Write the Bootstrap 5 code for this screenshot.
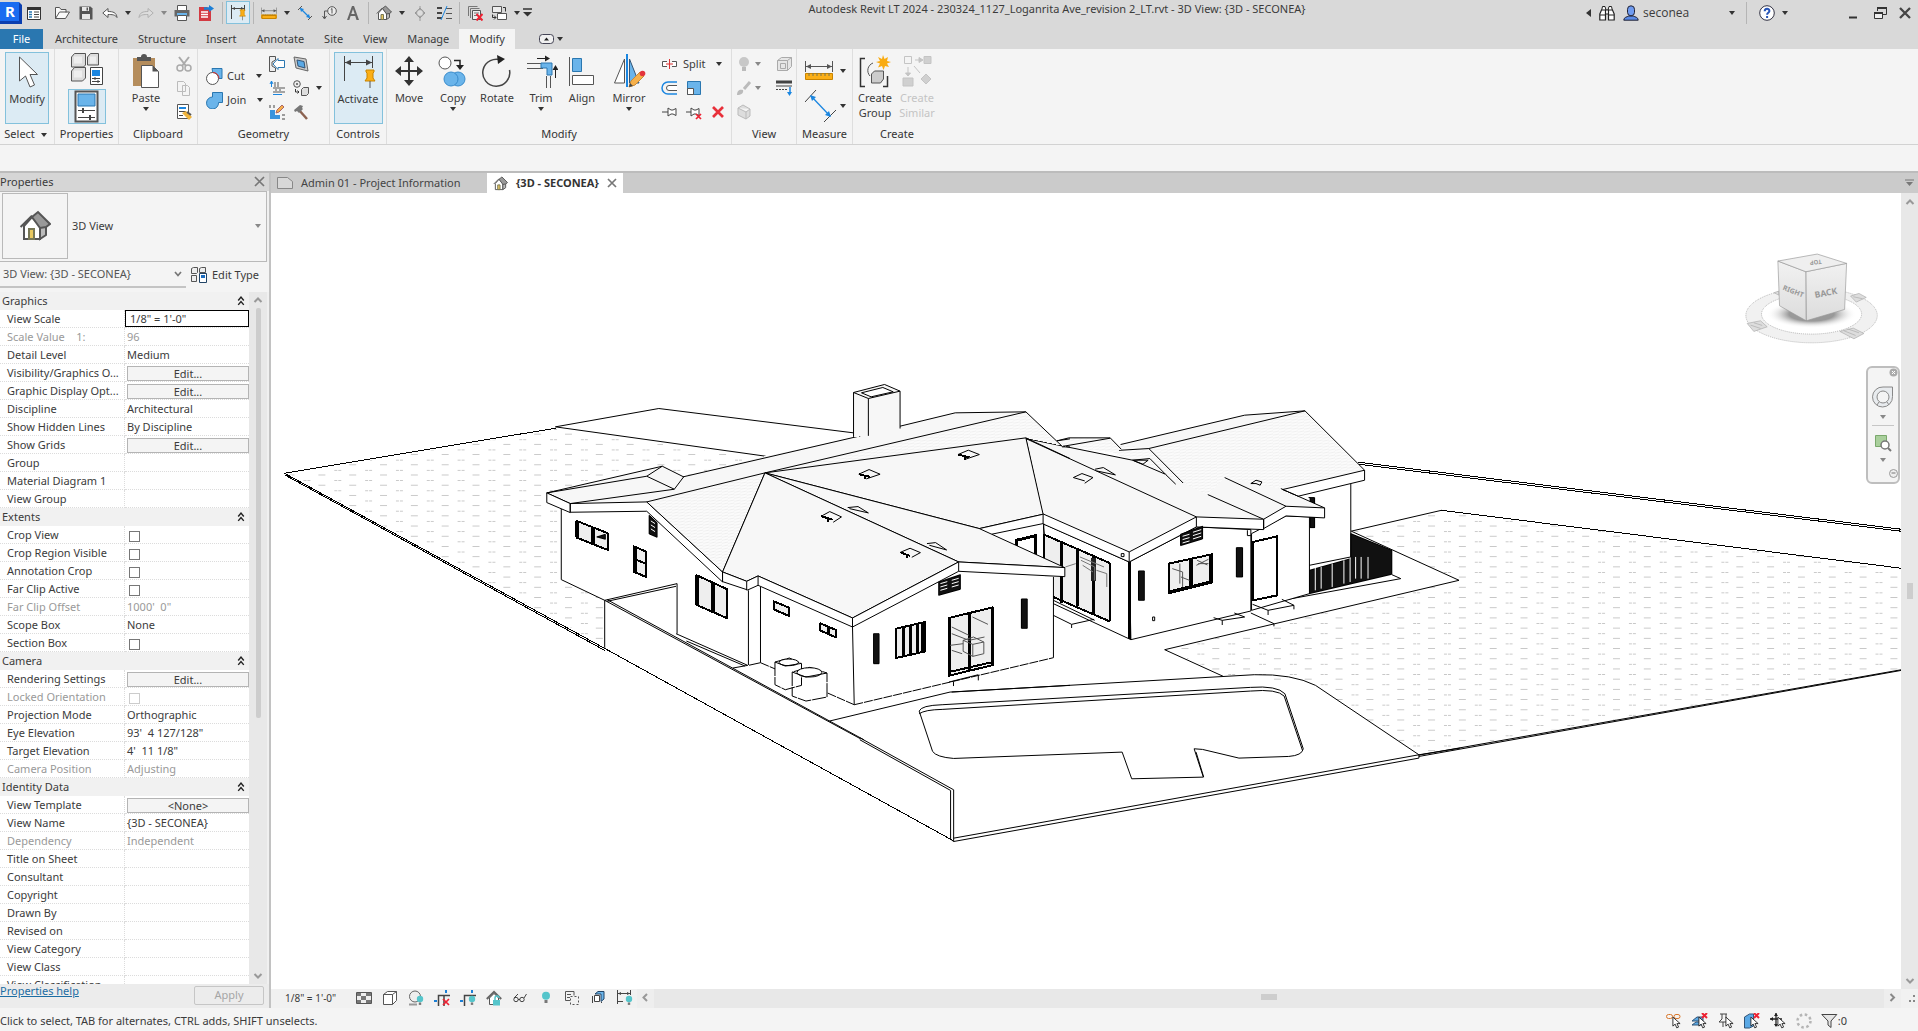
<!DOCTYPE html>
<html lang="en">
<head>
<meta charset="utf-8">
<meta name="viewport" content="width=device-width, initial-scale=1">
<title>Autodesk Revit LT 2024</title>
<link href="https://cdn.jsdelivr.net/npm/bootstrap@5.3.0/dist/css/bootstrap.min.css" rel="stylesheet">
<style>
body{font-family:"Noto Sans","Open Sans",sans-serif;font-size:11px;line-height:16px;color:#3b3b3b;background:#f4f4f4;overflow:hidden}
button{font:inherit;color:inherit;background:none;border:0;padding:0}
svg{display:block;flex:none}
.topbar{background:#d9d9d9}
.qat{height:25px}
.qb{width:16px;height:16px;margin:0 4px;flex:none}
.arr{width:12px;height:16px;flex:none;display:inline-flex;align-items:center;justify-content:center}
.arr::after{content:"";border:3px solid transparent;border-top:4px solid #333;border-bottom:0}
.arr.dim::after{border-top-color:#888}
.vsep{width:1px;height:22px;background:#b5b5b5;margin:0 3px;flex:none}
.on{background:#dcebf4;border:1px solid #83c1dc}
.qon{width:24px;height:23px;flex:none;padding:2px 3px}
.wb{width:17px}
.wmin{margin-left:52px}
.wres{margin-left:8px}
.user{width:95px;font-family:"Open Sans",sans-serif;font-size:12px}
.rtabs{height:20px;margin-top:4px}
.rtabs a{color:#3b3b3b;text-decoration:none;padding:2px 10px;height:20px}
.rtabs a.filetab{background:#2a77b0;color:#fff;width:43px;padding:2px 0;text-align:center;margin-right:2px}
.rtabs a.active{background:#f4f4f4}
.ribbon{background:#f4f4f4;border-bottom:1px solid #d2d2d2;height:96px}
.panel{border-right:1px solid #dedede;padding-top:3px}
.panel.last{border:0}
.pbody{height:72px}
.plabel{height:20px;line-height:20px;text-align:center;color:#333}
.big{width:44px;height:72px;padding-top:2px;line-height:15px;display:flex;flex-direction:column;align-items:center;flex:none}
.big svg{margin-bottom:2px}
.big .arr{height:8px}
.slim{width:38px}
.mirr{margin:0 2px 0 6px}
.off{color:#c4c4c4;width:40px}
.srow{height:24px;display:flex;align-items:center}
.cutjoin{width:55px;padding-top:12px}
.optbar{height:26px;border-bottom:2px solid #bcbcbc;box-sizing:content-box}
.props{width:271px;border-right:2px solid #c2c2c2;background:#f0f0f0}
.phead{height:18px;line-height:18px;background:#d6d6d6}
.typebox{height:71px;border:1px solid #b9b9b9;border-left:0;margin-right:2px;background:#f4f4f4;padding:2px}
.thumb{width:66px;height:66px;border:1px solid #b9b9b9}
.inst{height:31px;background:#f4f4f4}
.inst select{width:186px;height:26px;font:inherit;color:#555;border:0;border-bottom:2px solid #c4c4c4;border-radius:0;background:none;padding:0 3px;appearance:none;-webkit-appearance:none}
.plist{min-height:0;overflow:hidden}
.ptable{width:249px;table-layout:fixed;border-collapse:separate;border-spacing:0;background:#fff}
.ptable tr{height:18px}
.ptable th,.ptable td{font-weight:400;padding:0;height:18px;line-height:17px;border-bottom:1px dotted #dcdcdc;white-space:nowrap;overflow:hidden;text-overflow:ellipsis}
.ptable th{padding-left:7px;border-right:1px dotted #dcdcdc}
.ptable td{padding-left:2px}
.ptable .sec{background:#f1f1f1;border:0;padding-left:2px;line-height:18px}
.ptable .sec svg{margin:4px 4px 0 0;float:right}
.ptable .dis{color:#999}
.ptable td button{display:block;width:122px;height:15px;line-height:13px;border:1px solid #b4b4b4;background:#f4f4f4;margin-top:1px}
.ptable td input[type=checkbox]{appearance:none;-webkit-appearance:none;width:11px;height:11px;border:1px solid #777;background:#fff;display:block;margin:4px 0 0 2px}
.ptable td input[type=checkbox]:disabled{border-color:#ccc}
.ptable td.edit{padding:0}
.ptable td.edit input{width:124px;height:17px;border:1px solid #000;padding:0 4px;font:inherit;color:inherit;display:block}
.vscroll{width:18px;background:#e8e8e8}
.pfoot{height:25px;background:#ececec;line-height:14px}
.pfoot a{color:#1c6da3}
.apply{width:70px;height:19px;border:1px solid #c6c6c6;border-radius:2px;color:#a5a5a5;line-height:16px;margin:2px 5px 0 0}
.dtabs{height:20px;background:#cbcbcb}
.dtab{height:20px;padding:1px 6px 0;color:#444;text-decoration:none;display:flex;align-items:center;gap:8px}
.dtab.act{background:#fff;font-weight:700;color:#333}
.canvasbox{min-height:0;background:#fff;position:relative;overflow:hidden}
.canvasbox>svg{width:100%;height:100%}
.navbox{right:1px;top:173px;width:34px;height:118px;border:2px solid #bebebe;border-radius:6px;background:#f4f4f4}
.sb{width:17px;background:#e8e8e8}
.viewbar{height:19px;background:#f1f1f1}
.viewbar .ib{width:26px;flex:none;display:flex;justify-content:center;padding-bottom:2px}
.vscale{width:80px;padding:0 0 2px 14px;font-size:10px;text-align:left}
.status{height:23px;background:#f4f4f4;padding-top:2px}
.status .ib{width:26px;display:flex;justify-content:center}
.filter{margin:0 71px 0 4px}
</style>
</head>
<body class="d-flex flex-column vh-100">
<svg width="0" height="0" class="position-absolute" aria-hidden="true">
<defs>
<symbol id="home" viewBox="0 0 16 16"><path d="M2.500 8v6.500h8V8L6.500 3.500z" fill="#fff" stroke="#555"/><path d="M10.500 14.500l3-2V7l-3 1z" fill="#bbb" stroke="#555"/><path d="M6.500 3.500L9.500 1l6 6-2 1.500-3 .5z" fill="#999" stroke="#555"/><path d="M.8 8.500l5.700-5.700" stroke="#555" fill="none"/><path d="M5 9.500h2.500v5H5z" fill="#e8c860" stroke="#775"/></symbol>
<symbol id="cur" viewBox="0 0 10 14"><path d="M1 1v10l2.500-2.200L5.300 13l2-.9-1.800-3.900H9z" fill="#fff" stroke="#222"/></symbol>
<symbol id="dbl" viewBox="0 0 7 9"><path d="M1 4l2.500-3L6 4M1 8l2.500-3L6 8" fill="none" stroke="#222" stroke-width="1.300"/></symbol>
<symbol id="up" viewBox="0 0 10 8"><path d="M1.500 6L5 2.500 8.500 6" fill="none" stroke="#999" stroke-width="2"/></symbol>
<symbol id="ruler" viewBox="0 0 28 19"><path d="M.5 0v11M27.500 0v11M1 5.500h26" stroke="#555"/><path d="M1 5.500l5-2.500v5zM27 5.500l-5-2.500v5z" fill="#555"/><path d="M.5 12.500h27v6H.5z" fill="#fbaf17" stroke="#c98400"/><path d="M4 12v3M8 12v3M12 12v3M16 12v3M20 12v3M24 12v3" stroke="#775"/></symbol>
<symbol id="pin" viewBox="0 0 12 20"><path d="M2 1h8v2L9 4v5l2 3H1l2-3V4L2 3z" fill="#fbaf17" stroke="#c98400"/><path d="M6 12v7" stroke="#555"/></symbol>
<symbol id="bulb" viewBox="0 0 10 12"><circle cx="5" cy="4.200" r="4" fill="#55c5cb"/><path d="M3.500 8.500h3v3h-3z" fill="#777"/></symbol>
</defs></svg>

<header class="topbar">
<div class="qat d-flex align-items-center">
<svg width="22" height="23" viewBox="0 0 22 23"><path d="M0 1h19l3 3v19H0z" fill="#0b3fb0"/><path d="M0 1h19v19H0z" fill="#1a6cf0"/><text x="5" y="16" font-size="15" font-weight="700" fill="#fff">R</text></svg>
<button class="qb" aria-label="Application menu"><svg width="16" height="16"><path d="M1.500 2.500h13v12h-13z" fill="#fff" stroke="#333"/><path d="M1 2h14v3H1z" fill="#333"/><path d="M3 7h3M3 9.500h3M3 12h3" stroke="#2a77b0" stroke-width="1.500"/><path d="M8 7h5M8 9.500h5M8 12h5" stroke="#444"/></svg></button>
<button class="qb ms-2" aria-label="Open"><svg width="16" height="16"><path d="M1.500 13.500v-11h4l1.500 2h5v3M1.500 13.500l4-6.500h10l-4 6.500z" fill="#fafafa" stroke="#555"/></svg></button>
<button class="qb" aria-label="Save"><svg width="16" height="16"><path d="M1.500 1.500h11l2 2v11h-13z" fill="#555"/><path d="M4 2h7v4H4zM4 9h8v5H4z" fill="#e8e8e8"/><path d="M8.500 2.500h1.500v3H8.500z" fill="#555"/></svg></button>
<button class="qb" aria-label="Undo"><svg width="16" height="16"><path d="M.8 8L6 3.500v3c5 0 8.500 1 9 6-2-3-5-3-9-3v3z" fill="#fff" stroke="#555"/></svg></button><button class="arr" aria-label="Undo list"></button>
<button class="qb" aria-label="Redo"><svg width="16" height="16"><path d="M15.200 8L10 3.500v3c-5 0-8.500 1-9 6 2-3 5-3 9-3v3z" fill="#ddd" stroke="#b0b0b0"/></svg></button><button class="arr dim" aria-label="Redo list"></button>
<button class="qb" aria-label="Print"><svg width="16" height="16"><path d="M3.500.5h9v5h-9z" fill="#fff" stroke="#555"/><path d="M.5 5h15v6.500H.5z" fill="#666"/><path d="M3 8h10v4H3z" fill="#6ab4ea"/><path d="M3.500 10.500h9v5h-9z" fill="#fff" stroke="#555"/></svg></button>
<button class="qb" aria-label="Export PDF"><svg width="16" height="16"><path d="M1 2h8l4 4v10H1z" fill="#d33a42"/><path d="M3 7h7M3 9.500h7M3 12h7" stroke="#fff" stroke-width="1.500"/><path d="M6 3.500h6" stroke="#1b7fd6" stroke-width="2.500"/><path d="M11 0l5 3.500L11 7z" fill="#1b7fd6"/></svg></button>
<span class="vsep ms-1"></span><button class="on qon" aria-label="Activate controls"><svg width="17" height="17"><path d="M1.500 1v14M14.500 1v6M2 4.500h12" stroke="#444"/><path d="M2 4.500l3-1.500v3zM14 4.500L11 3v3z" fill="#444"/><use href="#pin" x="9" y="5" width="7" height="12"/></svg></button><span class="vsep"></span>
<button class="qb" aria-label="Measure"><svg width="16" height="16"><use href="#ruler" y="2" width="16" height="12"/><path d="M1 10.500h14v3H1z" fill="#fbaf17" stroke="#c98400"/></svg></button><button class="arr" aria-label="Measure list"></button>
<button class="qb" aria-label="Aligned dimension"><svg width="16" height="16"><path d="M1 5l4-4M11 15l4-4" stroke="#555"/><path d="M3.500 3.500l9 9" stroke="#1b86e0" stroke-width="1.300"/><path d="M3 3l4 1-3 3zM13 13l-4-1 3-3z" fill="#1b86e0"/></svg></button>
<button class="qb" aria-label="Tag by category"><svg width="16" height="16"><circle cx="11" cy="6" r="4.300" fill="#eee" stroke="#555"/><path d="M11 3.500v5M9.800 4.500L11 3.500M6.500 6H3.500v7M1.500 11l2 3 2-3" stroke="#555" fill="none"/></svg></button>
<button class="qb" aria-label="Text"><svg width="16" height="16"><path d="M2 15L7 1h2l5 14h-2.500l-1.300-4H5.600l-1.300 4z" fill="#666"/><path d="M6.300 9h3.400L8 4z" fill="#d9d9d9"/></svg></button>
<span class="vsep"></span>
<button class="qb" aria-label="Default 3D view"><svg width="16" height="16"><use href="#home" width="16" height="16"/></svg></button><button class="arr" aria-label="3D view list"></button>
<button class="qb" aria-label="Section"><svg width="16" height="16"><path d="M8 1v2M8 13v3M3 8l5-5 5 5-5 5z" fill="none" stroke="#999"/><circle cx="8" cy="8" r="3.500" fill="#ddd" stroke="#999"/></svg></button>
<button class="qb" aria-label="Thin lines"><svg width="16" height="16"><path d="M1 3h5M1 8h5M1 13h5" stroke="#444" stroke-width="2"/><path d="M10 3.500h6M10 8.500h6M10 13.500h6" stroke="#555"/><path d="M5 15L11 1" stroke="#1b86e0"/></svg></button>
<span class="vsep"></span>
<button class="qb" aria-label="Close inactive views"><svg width="16" height="16"><path d="M1.500 11V1.500h9M3.500 13V3.500h9" fill="none" stroke="#777"/><path d="M5.500 5.500h8v9h-8z" fill="#eee" stroke="#555"/><path d="M7 8h5M7 10.500h3" stroke="#777"/><path d="M9.500 9l6 6.500M15.500 9l-6 6.500" stroke="#e23" stroke-width="2"/></svg></button>
<button class="qb" aria-label="Switch windows"><svg width="16" height="16"><path d="M1.500 1.500h9v6h-9z" fill="#eee" stroke="#555"/><path d="M6.500 8.500h9v6h-9z" fill="#fff" stroke="#555"/><path d="M12 2.500h2.500v4M1.500 9.500v3H5M3 10.500l2 2-2 2" fill="none" stroke="#333"/></svg></button><button class="arr" aria-label="Window list"></button>
<button aria-label="Customize toolbar"><svg width="9" height="9"><path d="M0 1h9" stroke="#333" stroke-width="1.500"/><path d="M0 4h9L4.500 8.500z" fill="#333"/></svg></button>
<div class="flex-grow-1 text-center pb-2 text-nowrap">Autodesk Revit LT 2024 - 230324_1127_Loganrita Ave_revision 2_LT.rvt - 3D View: {3D - SECONEA}</div>
<button aria-label="Collapse search" class="px-1"><svg width="5" height="8"><path d="M5 0v8L0 4z" fill="#333"/></svg></button>
<button class="qb" aria-label="Search"><svg width="16" height="16"><path d="M2.500 6l1-4.500h2.500L7 5M13.500 6l-1-4.500H10L9 5M6 5h4v4H6z" fill="#fff" stroke="#222"/><path d="M.8 9l1.700-4H6.500v10H.8zM15.200 9l-1.700-4H9.500v10h5.700zM1 10h5M10 10h5" fill="#fff" stroke="#222" stroke-width="1.200"/></svg></button>
<button class="qb" aria-label="Account"><svg width="16" height="16"><path d="M.8 15.200c0-3 3-3.200 5-4.200h4.400c2 1 5 1.200 5 4.200z" fill="#5b8be6" stroke="#223"/><rect x="4.500" y=".8" width="7" height="10" rx="3.500" fill="#6f9bf0" stroke="#223"/></svg></button>
<button class="user d-flex align-items-center justify-content-between"><span>seconea</span><span class="arr"></span></button>
<span class="vsep mx-2"></span>
<button class="qb" aria-label="Help"><svg width="16" height="16"><circle cx="8" cy="8" r="7.300" fill="#fff" stroke="#334"/><path d="M5.700 6.300c0-3.300 4.700-3.200 4.700-.3 0 1.800-2.300 1.800-2.300 3.700M8.100 11v2" fill="none" stroke="#2755b8" stroke-width="2"/></svg></button><button class="arr" aria-label="Help list"></button>
<button class="qb wb wmin" aria-label="Minimize"><svg width="16" height="16"><path d="M6 12.500h8" stroke="#333" stroke-width="2"/></svg></button>
<button class="qb wb wres" aria-label="Restore"><svg width="16" height="16"><path d="M5.500 6V3.500h9v6H11" fill="none" stroke="#333"/><path d="M5 3h10" stroke="#333" stroke-width="2"/><path d="M2.500 7.500h8v6h-8z" fill="#eee" stroke="#333"/><path d="M2 8h9" stroke="#333" stroke-width="2"/></svg></button>
<button class="qb wb" aria-label="Close"><svg width="16" height="16"><path d="M3 3l10 10M13 3L3 13" stroke="#444" stroke-width="2.300"/></svg></button>
</div>
<nav class="rtabs d-flex">
<a href="#" class="filetab">File</a><a href="#">Architecture</a><a href="#">Structure</a><a href="#">Insert</a><a href="#">Annotate</a><a href="#">Site</a><a href="#">View</a><a href="#">Manage</a><a href="#" class="active">Modify</a>
<button class="d-flex align-items-center ms-4" aria-label="Minimize ribbon"><svg width="15" height="10"><rect x=".5" y=".5" width="14" height="9" rx="3" fill="#f0f0f0" stroke="#445"/><path d="M5 6.500h5L7.500 3.500z" fill="#222"/></svg><span class="arr"></span></button>
</nav>
</header>

<section class="ribbon d-flex">
<div class="panel" style="width:55px"><div class="pbody d-flex justify-content-center"><button class="big on"><svg width="28" height="34"><path d="M6.500 2v24l6-5 4.500 11 4.500-2-4.500-10.500h7.500z" fill="#fff" stroke="#555"/></svg>Modify</button></div><div class="plabel">Select <span class="arr align-middle"></span></div></div>
<div class="panel" style="width:64px"><div class="pbody d-flex flex-column align-items-center gap-1"><button aria-label="Type properties"><svg width="34" height="33"><g stroke="#555" fill="#ddd"><path d="M1.500 5l3-3.500h11V13l-2 2h-12zM17.500 5l3-3.500h8V13h-11zM1.500 19l3-3.500h11V26l-3 3h-11z"/><path d="M4 4.500h8v7H4zM4 18.500h8v7H4zM20 4.500h6v7h-6z" fill="#eee" stroke="none"/></g><path d="M20.500 15.500h12v17h-12z" fill="#fff" stroke="#444"/><path d="M22 18h8v6h-8z" fill="#1b86e0"/><path d="M22 26.500h8M22 29.500h8M25 25v3M28 28v3" stroke="#444"/></svg></button><button class="on px-1" aria-label="Properties" style="width:38px;height:35px"><svg width="28" height="33"><path d="M2.500 1.500h22v30h-22z" fill="#fff" stroke="#555" stroke-width="2"/><path d="M5 4h17v12H5z" fill="#6ab4ea" stroke="#2a77b0"/><path d="M5 20.500h17M5 27.500h17" stroke="#444"/><path d="M10 18v5M17 25v5" stroke="#444" stroke-width="2"/></svg></button></div><div class="plabel">Properties</div></div>
<div class="panel" style="width:79px"><div class="pbody d-flex justify-content-center gap-2 ps-1"><button class="big" style="width:36px"><svg width="28" height="34"><path d="M1 4h22v28H1z" fill="#b58d5c"/><path d="M5 3h4a3 3 0 016 0h4v4H5z" fill="#555"/><path d="M9.500 11.500h11l6 6v16h-17z" fill="#fff" stroke="#555"/><path d="M20.500 11.500v6h6z" fill="#555"/></svg>Paste<span class="arr"></span></button><div class="ps-1"><button class="srow" aria-label="Cut to clipboard"><svg width="16" height="16"><path d="M3 1l7 9M13 1L6 10" stroke="#aaa" stroke-width="2"/><circle cx="4" cy="12" r="3" fill="none" stroke="#aaa" stroke-width="1.500"/><circle cx="12" cy="12" r="3" fill="none" stroke="#aaa" stroke-width="1.500"/></svg></button><button class="srow" aria-label="Copy to clipboard"><svg width="16" height="16"><path d="M1.500 1.500h6l2 2v8h-8zM6.500 5.500h5l2 2v8h-7z" fill="#f4f4f4" stroke="#bbb"/></svg></button><button class="srow" aria-label="Match type"><svg width="16" height="16"><path d="M1.500.5h11v14h-11z" fill="#fff" stroke="#555"/><path d="M3 3h7v2H3z" fill="#1b86e0"/><path d="M3 7.500h7M3 11.500h4" stroke="#444"/><path d="M6 9l4-2 6 6-3 3z" fill="#f0b43c"/><path d="M11 8l4 3" stroke="#555" stroke-width="2"/></svg></button></div></div><div class="plabel">Clipboard</div></div>
<div class="panel" style="width:132px"><div class="pbody d-flex ps-2 gap-2"><div class="cutjoin"><button class="srow gap-1"><svg width="17" height="17"><path d="M6 .5h10v10H8z" fill="#6ab4ea" stroke="#2a77b0"/><circle cx="6.500" cy="10.500" r="6" fill="#fff" stroke="#555"/><path d="M7 4.500a6 6 0 016 6" fill="none" stroke="#d33"/></svg>Cut<span class="arr ms-1"></span></button><button class="srow gap-1"><svg width="17" height="17"><path d="M6.500.5h10v10h-4a6 6 0 11-6-5.500z" fill="#6ab4ea" stroke="#2a77b0"/></svg>Join<span class="arr ms-1"></span></button></div>
<div class="d-flex gap-2"><div><button class="srow" aria-label="Cope"><svg width="16" height="16"><path d="M.5.5h6V4L3 6v4l3.500 2v3.500h-6z" fill="#eee" stroke="#555"/><path d="M15.500 4.500H9v-2L4 8l5 5.500v-2h6.500z" fill="#fff" stroke="#2a77b0"/></svg></button><button class="srow" aria-label="Wall joins"><svg width="16" height="16"><path d="M2.500 1v6M1 4l1.500-3L4 4M4 14.500h9" stroke="#1b86e0" fill="none"/><path d="M6 2v5M9 2v5M4 8h12M4 12h12M6 10h2M10 10h2" stroke="#555"/></svg></button><button class="srow" aria-label="Split face"><svg width="16" height="16"><path d="M1 6v9h10v-4H6V6z" fill="#3a94dd"/><path d="M1 1v3M5 1v3M13 11h3M13 15h3" stroke="#444"/><path d="M7 9l1-3 5-5 2 2-5 5z" fill="#f6b04a" stroke="#a66"/></svg></button></div>
<div><button class="srow" aria-label="Wall opening"><svg width="16" height="16"><path d="M1 1l12 2 2 12-12-3z" fill="#ccc" stroke="#666"/><path d="M4 4l7 1.500L12 12l-7-2z" fill="#5aa9e6" stroke="#357"/></svg></button><button class="srow" aria-label="Demolish"><svg width="16" height="16"><circle cx="4" cy="4" r="3.300" fill="#eee" stroke="#555"/><circle cx="4" cy="4" r="1" fill="#555"/><path d="M2.500 9v3H6M4.500 10.500L6 12l-1.500 1.500" fill="none" stroke="#333"/><path d="M8.500 9.500l2-2h5v6l-2 2h-5z" fill="#ddd" stroke="#555"/></svg></button><button class="srow" aria-label="Paint"><svg width="16" height="16"><path d="M6 6l8 9" stroke="#8b6250" stroke-width="2.500"/><path d="M1 6l6-5 3 1-1 2 1 1-4 4-2-2-2 1z" fill="#777"/></svg></button></div><span class="d-flex align-items-center"><button class="arr" aria-label="More" style="margin-left:-4px"></button></span></div></div><div class="plabel">Geometry</div></div>
<div class="panel" style="width:57px"><div class="pbody d-flex justify-content-center"><button class="big on" style="width:49px"><svg width="36" height="34"><path d="M4.500 1v25M32.500 1v12M5 7.500h27" stroke="#444"/><path d="M5 7.500l6-3v6zM32 7.500l-6-3v6z" fill="#444"/><use href="#pin" x="23" y="14" width="14" height="20"/></svg>Activate</button></div><div class="plabel">Controls</div></div>
<div class="panel" style="width:345px"><div class="pbody d-flex">
<button class="big"><svg width="28" height="34"><path d="M14 6v22M3 17h22" stroke="#333" stroke-width="2"/><path d="M14 2l5 6H9zM14 32l5-6H9zM0 17l6-5v10zM28 17l-6-5v10z" fill="#333"/></svg>Move</button>
<button class="big"><svg width="32" height="34"><circle cx="8" cy="9" r="6" fill="#fff" stroke="#555"/><path d="M17 6.500h6v6" fill="none" stroke="#222" stroke-width="1.500"/><path d="M19 11h8l-4 5z" fill="#222"/><circle cx="21" cy="25" r="7" fill="#6ab4ea" stroke="#3a8ccc"/><circle cx="14" cy="25" r="7" fill="#6ab4ea" stroke="#3a8ccc"/></svg>Copy<span class="arr"></span></button>
<button class="big"><svg width="32" height="34"><path d="M21 6.500A13.500 13.500 0 1028.500 16" fill="none" stroke="#444" stroke-width="1.500"/><path d="M16 1l8 4-7 5z" fill="#222"/></svg>Rotate</button>
<button class="big"><svg width="34" height="34"><path d="M3 9.500h16M3 14.500h16M22.500 22v12M26.500 22v12" stroke="#555"/><path d="M17 9h11v12h-5v-7h-6z" fill="#6ab4ea" stroke="#2a77b0"/><path d="M13 4.500h9M31.500 24v-9" stroke="#222"/><path d="M21 1.500l5 3-5 3zM28.500 16l3-5 3 5z" fill="#222"/></svg>Trim<span class="arr"></span></button>
<button class="big slim"><svg width="28" height="34"><path d="M1.500 3v29" stroke="#555"/><path d="M4.500 4.500h9v13h-9z" fill="#6ab4ea" stroke="#2a77b0"/><path d="M4.500 21.500h21v9h-21z" fill="#fff" stroke="#555"/></svg>Align</button>
<button class="big mirr"><svg width="34" height="34"><path d="M12.500 5v24H2.500z" fill="#fff" stroke="#555"/><path d="M17.500 5v24H27z" fill="#6ab4ea" stroke="#357"/><path d="M15 0v33" stroke="#1b86e0" stroke-width="2"/><path d="M17 33l2-6 9-9 4 4-9 9z" fill="#f6b04a" stroke="#c68a3a"/><path d="M17 33l1-4 3 3z" fill="#444"/><circle cx="30.500" cy="19.500" r="2.800" fill="#e3343c"/></svg>Mirror<span class="arr"></span></button>
<div class="ms-2"><div class="srow"><button class="d-flex align-items-center gap-1"><svg width="18" height="16"><path d="M6 5.500H1.500v5H6M11 5.500h4.500v5H11" fill="#fff" stroke="#555"/><path d="M8.500 3v10M5 8h7" stroke="#d33"/></svg>Split<span class="arr ms-1"></span></button></div>
<div class="srow gap-2"><button aria-label="Offset"><svg width="17" height="16"><path d="M16 2H7a6 6 0 000 12h9" fill="none" stroke="#1b86e0" stroke-width="1.500"/><path d="M16 5.500H8a2.500 2.500 0 000 5h8" fill="#fff" stroke="#555"/></svg></button><button aria-label="Scale"><svg width="16" height="16"><path d="M1.500 1.500h13v13h-13z" fill="#6ab4ea" stroke="#2a77b0"/><path d="M1.500 8.500h6v6h-6z" fill="#fff" stroke="#555"/></svg></button></div>
<div class="srow gap-2"><button aria-label="Pin"><svg width="17" height="16"><path d="M1 8h6M7 4v8l3-2h2l3 1.500v-7L12 6h-2z" fill="#fff" stroke="#444"/></svg></button><button aria-label="Unpin"><svg width="17" height="16"><path d="M0 8h5M5 4v8l3-2h2l3 1.500v-7L10 6H8z" fill="#fff" stroke="#444"/><path d="M10 10l5 5M15 10l-5 5" stroke="#e23" stroke-width="1.700"/></svg></button><button aria-label="Delete"><svg width="14" height="16"><path d="M2 3l10 10M12 3L2 13" stroke="#e8303a" stroke-width="2.700"/></svg></button></div></div>
</div><div class="plabel">Modify</div></div>
<div class="panel" style="width:65px"><div class="pbody d-flex justify-content-center"><div style="width:40px"><div class="srow"><button aria-label="Hide in view"><svg width="16" height="16"><circle cx="8" cy="6" r="5" fill="#c8c8c8"/><path d="M6 11h4v4H6z" fill="#bbb"/></svg></button><button class="arr dim" aria-label="Hide options"></button></div><div class="srow"><button aria-label="Override graphics"><svg width="16" height="16"><path d="M14 2L8 9" stroke="#bbb" stroke-width="3"/><path d="M1 15c0-5 3-6 6-5 1 3-2 5-6 5z" fill="#bbb"/></svg></button><button class="arr dim" aria-label="Override options"></button></div><div class="srow"><button aria-label="Displace"><svg width="16" height="16"><path d="M2 4l5-3 7 4v7l-4 3-8-4zM2 4l8 4 4-3M10 8v7" fill="#ddd" stroke="#bbb"/></svg></button></div></div>
<div><button class="srow" aria-label="Selection box"><svg width="16" height="16"><path d="M1.500 4.500l4-3h10v9l-4 4h-10zM1.500 4.500h10v10M11.500 4.500l4-3M4.500 7.500h5v5h-5z" fill="#e6e6e6" stroke="#aaa"/></svg></button><button class="srow" aria-label="Linework"><svg width="16" height="16"><path d="M0 2h16" stroke="#444" stroke-width="3"/><path d="M0 6h16" stroke="#444"/><path d="M0 9.500h11" stroke="#444" stroke-dasharray="2 1"/><path d="M14 7v6" stroke="#1b86e0" stroke-width="1.500"/><path d="M11 12h5l-2.500 4z" fill="#1b86e0"/></svg></button></div></div><div class="plabel">View</div></div>
<div class="panel" style="width:56px"><div class="pbody ps-2 pt-2"><div class="d-flex align-items-center"><button aria-label="Measure between references"><svg width="32" height="22"><use href="#ruler" y="1" width="28" height="19"/></svg></button><button class="arr" aria-label="Measure options"></button></div><div class="d-flex align-items-center mt-2"><button aria-label="Dimension"><svg width="32" height="32"><path d="M0 12L11 0M19 32L31 20" stroke="#444"/><path d="M6 6l19 20" stroke="#1b86e0" stroke-width="1.300"/><path d="M5 5l6 2-4 4zM26 27l-6-2 4-4z" fill="#1b86e0"/></svg></button><button class="arr" aria-label="Dimension options"></button></div></div><div class="plabel">Measure</div></div>
<div class="panel last" style="width:88px"><div class="pbody d-flex"><button class="big"><svg width="32" height="34"><path d="M6 4.500H1.500v28H6M24 32.500h4.500V22" fill="none" stroke="#333" stroke-width="1.500"/><path d="M14 9a8 8 0 00-3 13" fill="none" stroke="#555"/><path d="M12.500 20l3-3h9v8l-3 4h-9z" fill="#ccc" stroke="#555"/><path d="M24 1l1.500 4 3.500-2-1 4 4 1-4 1.500 2 3.500-4-1-1.500 4-1.500-4-4 1.500 2-4-4-1.500 4-1-2-4 4 2z" fill="#f9ab10"/></svg>Create<br>Group</button><button class="big off" disabled><svg width="30" height="34"><g stroke="#c4c4c4" fill="none"><path d="M2.500 2.500h7v7h-7zM13 6h6M6 13v8M12 12l6 7"/><path d="M22 2.500h7v7h-7zM1 24h10v8H1zM24 20l5 5-5 5-5-5z" fill="#d0d0d0"/><path d="M17 3.500l4 2.500-4 2.500zM3.500 19l2.500 3 2.500-3z" fill="#c4c4c4"/></g></svg>Create<br>Similar</button></div><div class="plabel">Create</div></div>
</section>
<div class="optbar"></div>

<div class="d-flex flex-grow-1" style="min-height:0">
<aside class="props d-flex flex-column flex-shrink-0">
<div class="phead d-flex justify-content-between"><span>Properties</span><button aria-label="Close properties" class="me-1"><svg width="11" height="11"><path d="M1 1l9 9M10 1l-9 9" stroke="#777" stroke-width="1.700"/></svg></button></div>
<div class="typebox d-flex align-items-center"><div class="thumb d-flex align-items-center justify-content-center"><svg width="32" height="32"><use href="#home" width="32" height="32"/></svg></div><span class="ms-1 flex-grow-1">3D View</span><button class="arr dim" aria-label="Type list"></button></div>
<div class="inst d-flex"><div class="position-relative"><select aria-label="Instance"><option>3D View: {3D - SECONEA}</option></select><svg class="position-absolute end-0 top-0 mt-2 me-1 pe-none" width="8" height="8"><path d="M1 2l3 3.500L7 2" fill="none" stroke="#777" stroke-width="1.700"/></svg></div><button class="d-flex align-items-center gap-1 ms-1 mb-1"><svg width="18" height="17"><path d="M1.500 2.500l2-1h4v5l-1 1h-5zM9.500 2.500l2-1h4v5h-6zM1.500 9.500h5v6h-5z" fill="#eee" stroke="#555"/><path d="M9.500 7.500h7v9h-7z" fill="#fff" stroke="#246"/><path d="M11 9h4v3h-4z" fill="#1b6cc0"/></svg>Edit Type</button></div>
<div class="plist flex-grow-1 d-flex align-items-start">
<table class="ptable"><colgroup><col style="width:125px"><col></colgroup><tbody>
<tr><th colspan="2" class="sec">Graphics<svg width="8" height="10"><use href="#dbl" width="8" height="10"/></svg></th></tr>
<tr><th><label for="vs">View Scale</label></th><td class="edit"><input id="vs" value="1/8&quot; = 1'-0&quot;"></td></tr>
<tr class="dis"><th>Scale Value &nbsp;&nbsp; 1:</th><td>96</td></tr>
<tr><th>Detail Level</th><td>Medium</td></tr>
<tr><th>Visibility/Graphics O...</th><td><button>Edit...</button></td></tr>
<tr><th>Graphic Display Opt...</th><td><button>Edit...</button></td></tr>
<tr><th>Discipline</th><td>Architectural</td></tr>
<tr><th>Show Hidden Lines</th><td>By Discipline</td></tr>
<tr><th>Show Grids</th><td><button>Edit...</button></td></tr>
<tr><th>Group</th><td></td></tr>
<tr><th>Material Diagram 1</th><td></td></tr>
<tr><th>View Group</th><td></td></tr>
<tr><th colspan="2" class="sec">Extents<svg width="8" height="10"><use href="#dbl" width="8" height="10"/></svg></th></tr>
<tr><th><label for="c1">Crop View</label></th><td><input type="checkbox" id="c1"></td></tr>
<tr><th><label for="c2">Crop Region Visible</label></th><td><input type="checkbox" id="c2"></td></tr>
<tr><th><label for="c3">Annotation Crop</label></th><td><input type="checkbox" id="c3"></td></tr>
<tr><th><label for="c4">Far Clip Active</label></th><td><input type="checkbox" id="c4"></td></tr>
<tr class="dis"><th>Far Clip Offset</th><td>1000'&nbsp; 0"</td></tr>
<tr><th>Scope Box</th><td>None</td></tr>
<tr><th><label for="c5">Section Box</label></th><td><input type="checkbox" id="c5"></td></tr>
<tr><th colspan="2" class="sec">Camera<svg width="8" height="10"><use href="#dbl" width="8" height="10"/></svg></th></tr>
<tr><th>Rendering Settings</th><td><button>Edit...</button></td></tr>
<tr class="dis"><th><label for="c6">Locked Orientation</label></th><td><input type="checkbox" id="c6" disabled></td></tr>
<tr><th>Projection Mode</th><td>Orthographic</td></tr>
<tr><th>Eye Elevation</th><td>93'&nbsp; 4 127/128"</td></tr>
<tr><th>Target Elevation</th><td>4'&nbsp; 11 1/8"</td></tr>
<tr class="dis"><th>Camera Position</th><td>Adjusting</td></tr>
<tr><th colspan="2" class="sec">Identity Data<svg width="8" height="10"><use href="#dbl" width="8" height="10"/></svg></th></tr>
<tr><th>View Template</th><td><button>&lt;None&gt;</button></td></tr>
<tr><th>View Name</th><td>{3D - SECONEA}</td></tr>
<tr class="dis"><th>Dependency</th><td>Independent</td></tr>
<tr><th>Title on Sheet</th><td></td></tr>
<tr><th>Consultant</th><td></td></tr>
<tr><th>Copyright</th><td></td></tr>
<tr><th>Drawn By</th><td></td></tr>
<tr><th>Revised on</th><td></td></tr>
<tr><th>View Category</th><td></td></tr>
<tr><th>View Class</th><td></td></tr>
<tr><th>View Classification</th><td></td></tr>
</tbody></table>
<div class="vscroll d-flex flex-column align-items-center h-100"><svg width="10" height="16" viewBox="0 -4 10 16"><use href="#up" width="10" height="8"/></svg><div class="flex-grow-1 d-flex flex-column"><div style="width:5px;height:410px;background:#cdcdcd;border-radius:2px"></div></div><svg width="10" height="16" viewBox="0 -4 10 16"><use href="#up" width="10" height="8" transform="rotate(180 5 4)"/></svg></div>
</div>
<div class="pfoot d-flex justify-content-between align-items-start"><a href="#">Properties help</a><button class="apply" disabled>Apply</button></div>
</aside>

<main class="d-flex flex-column flex-grow-1" style="min-width:0">
<div class="dtabs d-flex">
<a href="#" class="dtab" style="width:216px"><svg width="16" height="12"><path d="M.5.5h10l5 4v7H.5z" fill="#d8d8d8" stroke="#888"/></svg>Admin 01 - Project Information</a>
<a href="#" class="dtab act"><svg width="15" height="15"><use href="#home" width="15" height="15"/></svg>{3D - SECONEA}<svg width="10" height="10"><path d="M1 1l8 8M9 1L1 9" stroke="#777" stroke-width="1.700"/></svg></a>
<button class="ms-auto me-1" aria-label="Tab list"><svg width="9" height="8"><path d="M0 1h9" stroke="#777"/><path d="M1 3h7L4.500 7z" fill="#777"/></svg></button>
</div>
<div class="d-flex flex-grow-1" style="min-height:0">
<div class="canvasbox flex-grow-1">
<svg viewBox="271 193 1630 796" preserveAspectRatio="xMidYMid slice" shape-rendering="crispEdges">
<defs>
<pattern id="grass" patternUnits="userSpaceOnUse" x="473" y="440" width="30.800" height="10.200"><path d="M0 4.500h7M15.400 9.500h3M19.400 9.500h3" stroke="#c6c6c6" shape-rendering="crispEdges"/></pattern>
<pattern id="tile" patternUnits="userSpaceOnUse" width="18" height="9"><rect width="18" height="9" fill="#fbfbfb"/><path d="M0 6L18 2" stroke="#e4e4e4" stroke-width="1.500" shape-rendering="auto"/></pattern>
<radialGradient id="sh"><stop offset=".5" stop-color="#999"/><stop offset="1" stop-color="#fff" stop-opacity="0"/></radialGradient>
<linearGradient id="cube" x2="0" y2="1"><stop stop-color="#f2f2f2"/><stop offset="1" stop-color="#dcdcdc"/></linearGradient>
<style>.L *{vector-effect:non-scaling-stroke}.L{stroke:#000;fill:none;stroke-linejoin:round}.W{fill:#fff}.R{fill:#f7f7f7}.T{fill:url(#tile)}.K{fill:#111}.G{fill:#eee;stroke-width:2}</style>
</defs>
<path fill="url(#grass)" d="M290 474L556 429l210 30v100L562 580l43 20v46z"/>
<path fill="url(#grass)" d="M1168 649L1272 625l187-45-108-48 90-21 460 57v102l-482 83-107-70-90-8z"/>
<g class="L"><path d="M1358 462L1901 529M1358 464L1901 531M1441 510L1901 568M285 473L556 428M285 473L605 648 953 840M286 475L605 650"/></g>
<g class="L" transform="translate(1000 400) scale(.34439 .33333)">
<path d="M1018 393l264-63M1020 393l312 147-854 208 170 80"/>
<path class="W" d="M700 300L1018 250v220L898 495v85L730 620z" stroke="none"/>
<path class="K" d="M898 510l120-35v-75l119 50v72L898 580z"/>
<path d="M915 500v70M932 500v65M964 490v70M998 480v70M1016 470v75M1032 470v65M1048 470v65M1068 470v65" stroke="#fff"/>
<path d="M1018 250v220L898 495M820 600l343-65-26-12"/>
<path class="K" d="M896 292h17v90h-13v-90z"/>
<path class="T" d="M320 152L350 133 710 45 885 32 1058 210 820 268 760 262 652 232 600 285 562 280z" stroke="none"/>
<path class="R" stroke="none" d="M350 133L710 45 885 32 432 145z"/>
<path class="W" d="M1058 210v30L865 288 820 268z"/>
<path d="M350 133L710 45 885 32 1058 210M432 145L885 32M320 152l112-7 130 135M385 180l50-5 75 78"/>
<path class="T" d="M165 122l35-9h120l32 34-20 10-150-18z" stroke="none"/><path d="M165 122l35-9h120l32 34M185 138l135-24"/>
<path class="R" d="M75 115l310 65 95 42 120 60 165 75-195-7-195 105-252-115z" stroke="none"/>
<path class="R" d="M603 283l49-51 148 30 142 61-112-5-65 39z" stroke="none"/>
<path d="M75 115l310 65 95 42M75 115l495 235M75 115l48 225M603 283l162 74M652 232l178 86M815 265l127 58M728 250l15-10 17 5-5 10-12-5zM213 232l25-12 32 12-24 17M213 232l33 10M276 207l24-5 35 22-55-12"/>
<path d="M385 180l45 0-15 12-30-12M480 222l30 30"/>
<path class="W" d="M898 350v230L730 630V400l100-53z"/>
<path class="W" d="M125 370L375 485l5 233L155 610z"/>
<path class="W" d="M375 485L570 380l158 8v244L380 718z"/>
<path class="W" d="M830 318l112 5v30l-112-6-65 38v-28zM570 350l195 7v31l-195-8-195 105-252-115v-30l252 115zM375 455v30M570 350v30M765 357v30"/>
<path d="M377 485v230" stroke-width="3"/>
<path class="W" d="M735 425l70-17v177l-70 15z" stroke-width="2"/>
<path class="G" d="M128 403l190 85v175l-190-85z"/><path stroke-width="3" d="M178 428v180M225 448v170M272 470v175"/><path stroke-width="5" stroke="#222" d="M272 472v70"/><path stroke="#777" d="M190 500l30-10M235 480l40 20v40M280 510l30 10v40M232 470l70 30M240 495l30 20"/>
<path class="G" d="M490 490l125-28v85l-125 32z" stroke-width="3"/><path stroke-width="4" d="M555 475v88"/><path stroke-width="3" d="M612 462v86M490 575l122-30"/><path stroke="#555" d="M500 505l30 10v45M575 490h30M525 530l25 10M522 490v60M570 495l35-18M572 480l30 14"/>
<path class="K" d="M402 512h17v88h-17zM686 442h18v88h-18zM524 402l64-24v38l-64 20z"/><path stroke="#fff" d="M530 408l20-6M530 418l20-6M530 428l20-6M560 396l24-8M560 406l24-8M560 416l24-8"/>
<path d="M352 460h8v9h-8zM443 650h6v11h-6zM718 390v16h10M733 612l45 18 75-15-35-18M778 630v14M853 615v12M620 652l25 8 65-10-30-12M645 660v14M728 638l67 32v8M155 645l53 27 65-15M208 672v11M155 600l120 60"/>
</g>
<g class="L" transform="translate(530 370) scale(.34439 .33333)">
<path d="M75 170l300-55 565 73M75 170l610 88"/>
<path class="R" d="M445 320L685 258 960 197 1235 128 1440 125 683 308 340 395 118 400z" stroke="none"/>
<path class="T" d="M683 308L1440 125 1545 225 1568 232 1440 203z" stroke="none"/>
<path d="M445 320L960 197M1075 168L1235 128 1440 125 1545 228M683 308L1440 125M1530 212l38-6M1545 230h23"/>
<path class="R" d="M940 67v133l43-3 92-22V63l-45-20z" stroke="none"/>
<path d="M940 200V67l90-24 45 20v112M940 67l43 18 92-22M983 85v112"/><path class="W" d="M963 68l62-16 30 13-64 15z"/>
<path class="R" d="M50 368L385 288 447 320 420 357 118 400z"/><path d="M50 368L340 318l45-30M340 318l80 39"/>
<path class="W" stroke="none" d="M92 415l26 12 222-4 220 212 73 25 2 225-207-95V640L218 690 92 628z"/>
<path d="M92 415v213l126 62"/>
<path class="W" d="M50 368v29l68 30v-27zM118 400l222-5 220 210v30L340 423l-222 3z"/>
<path class="T" d="M340 395L683 308 560 605z"/>
<path class="R" d="M683 308L1440 203 1490 432 1305 475z"/>
<path class="W" stroke="none" d="M1305 475l185-43v200l-90-50z"/>
<path d="M1305 475l185-43v28l-150 32M1492 460v130M1440 203l128 62"/><path d="M1413 510l55-14v60l-55-24z" stroke-width="3"/>
<path class="R" d="M683 308L1305 475 1553 592 1245 575z"/>
<path class="R" d="M683 308L1245 575 937 743 663 617 630 633 560 605z"/>
<path class="W" stroke="none" d="M633 660l30-15 274 125 5 233-272-126-35 8zM937 770l308-165 275 15v242L942 1003z"/>
<path d="M635 660v225l35-8V650M937 770l5 233M1520 620v242"/><path d="M942 1003L1520 862M670 877l50 22M865 968l77 35" stroke-dasharray="9 1"/>
<path class="W" d="M560 605l70 28 33-16 274 126 308-168 308 17v27l-308-16-308 167-274-125-30 14-73-25zM937 743v27M1245 575v28M630 633v27M663 617v28"/>
<path stroke-width="2" d="M955 312l33 8M1243 253l33 8M846 438l33 10M1076 546l28 11M973 318v7M1264 260v8M866 446v8M1094 554v8"/>
<path d="M955 312l30-14 32 14-40 14M1243 253l30-13 32 13-40 14M846 438l25-14 34 16-24 16M923 412l30-3 30 19-55-13M1076 546l28-12 30 13-25 14M1153 520l25-3 32 22-50-14"/>
<path class="G" d="M137 452l90 37v50l-90-37z" stroke-width="3"/><path stroke-width="4" d="M184 472v50M139 452v48"/><path class="K" d="M347 435l23 22v44l-23-10zM195 500l25-8v15z"/><path stroke="#fff" d="M352 452l12 8M352 464l12 8M352 476l12 8"/>
<path class="G" d="M302 528l36 16v76l-36-16zM302 566l36 14" stroke-width="3"/><path d="M306 530v74" stroke-width="4"/>
<path class="G" d="M485 615l89 42v87l-89-40z" stroke-width="2"/><path stroke-width="4" d="M531 637v88M487 615v88"/>
<path class="G" d="M708 693l45 19v25l-45-20zM844 759l45 20v22l-45-20z" stroke-width="3"/><path stroke-width="3" d="M867 770v22"/>
<path class="K" d="M998 790h16v90h-16zM1427 686h17v88h-17zM1187 635l63-22v44l-63 18z"/><path stroke="#fff" d="M1192 640l20-6M1192 650l20-6M1192 660l20-6M1225 630l20-6M1225 640l20-6M1225 650l20-6"/>
<path class="G" d="M1063 775l85-20v88l-85 20z" stroke-width="3"/><path stroke-width="3" d="M1085 770v85M1105 765v85M1125 760v85M1140 758v84"/>
<path class="G" d="M1217 743l127-32v173l-127 32z"/><path d="M1277 727v172M1217 743v172M1343 712v172" stroke-width="3"/><path stroke="#555" d="M1225 770l50 25M1225 790l50 20 45-10M1258 810l30-10 30 15v35l-32 8-28-15zM1220 825l38-5M1225 840l30 10M1285 740l45 22M1258 810l28 12v36M1286 822l32-7"/><path stroke-width="2" d="M1217 905l127-30"/>
<path d="M1217 935l85-22M1230 935v12M1302 915v15M870 1052l350-87 348-20"/>
<path class="W" d="M712 875v68l30 15 47-13v-65l-35-17zM762 905v72l40 15 61-12v-72l-50-17z" stroke-dasharray="14 1"/><ellipse cx="752" cy="876" rx="28" ry="10" class="W"/><ellipse cx="812" cy="906" rx="36" ry="14" class="W"/><path d="M712 875l30 12 47-8M762 905l40 15 61-12"/>
<path class="W" d="M218 690L428 640V790L640 885 590 893z" stroke="none"/>
<path d="M218 690L428 640v150M225 693l200-45M218 690v142M425 790l208 95-43 8M455 812l170 75"/>
<path d="M218 690l742 415M225 688l745 420"/>
</g>
<g class="L" transform="translate(860 650) scale(.38265 .33333)">
<path d="M0 262L245 418V573M0 268L237 420v146l8 7"/>
<path d="M245 563L1460 313v10L245 573M1460 313L1568 293M240 125L1030 73Q1130 70 1190 105L1460 313M1460 314l1260-256M1460 318L2720 60"/>
<path d="M155 182Q160 165 215 163L1020 111Q1090 105 1110 130L1158 295Q1155 315 1120 318L990 323 895 297 873 295 897 380 710 385 685 305 245 324Q200 320 190 303zM155 190Q170 178 215 177L1020 122Q1090 115 1108 137L1156 300M878 305l20 75"/>
</g>
<g shape-rendering="auto" transform="translate(1700 160) scale(.333333)" stroke="#999" stroke-width="2">
<path fill-rule="evenodd" fill="#f1f1f1" stroke-dasharray="3 3" d="M136 466a197 82 0 10394 0 197 82 0 10-394 0zM183 462a150 60 0 11300 0 150 60 0 11-300 0z"/>
<ellipse cx="333" cy="462" rx="135" ry="42" fill="url(#sh)" stroke="none"/>
<g fill="#ddd" stroke="#aaa"><path d="M140 490l40-8 20 18-40 14zM450 408l25-8 22 12-30 14zM418 514l40-10 32 16-30 16zM220 398l15-5v12z"/><path d="M150 495l30 10M160 488l25 8M430 512l35 14M440 506l35 12M458 410l28 6" fill="none"/></g>
<path fill="url(#cube)" d="M232 303l5 134 80 45 115-34 6-138-122 25z"/><path fill="#efefef" d="M232 303l118-21 88 28-122 25z"/><path d="M316 335l1 147" fill="none" stroke="#777"/>
<g stroke="none" fill="#999" font-weight="700"><text transform="translate(344 414) rotate(-11)" font-size="26">BACK</text><text transform="translate(245 388) rotate(22)" font-size="21">RIGHT</text><text transform="translate(362 298) rotate(172)" font-size="18">TOP</text></g>
</g>
</svg>
<div class="navbox position-absolute d-flex flex-column align-items-center">
<button class="align-self-end" aria-label="Close navigation bar"><svg width="9" height="9"><circle cx="4.500" cy="4.500" r="4" fill="#aaa"/><path d="M3 3l3 3M6 3l-3 3" stroke="#fff"/></svg></button>
<button class="mt-2" aria-label="Steering wheel"><svg width="24" height="24"><path d="M12 2h9.500v9.500A10 10 0 1112 2z" fill="#e8ebee" stroke="#888"/><circle cx="12" cy="12" r="6" fill="#f4f4f4" stroke="#888"/><path d="M8 17l-2 3M16 17l2 3" stroke="#888"/></svg></button>
<button class="arr dim" aria-label="Wheel options"></button>
<hr class="w-75 m-0"><button class="mt-2" aria-label="Zoom region"><svg width="18" height="18"><path d="M1.500 1.500h11v11h-11z" fill="#a9cf9c" stroke="#7aa86c"/><circle cx="11" cy="11" r="4" fill="#fff" stroke="#777" stroke-width="1.500"/><path d="M14 14l3 3" stroke="#777" stroke-width="2"/></svg></button>
<button class="arr dim" aria-label="Zoom options"></button>
<button class="align-self-end mt-auto mb-1" aria-label="Customize"><svg width="9" height="9"><circle cx="4.500" cy="4.500" r="4" fill="#eee" stroke="#999"/><path d="M2.500 4h4" stroke="#777"/></svg></button>
</div>
</div>
<div class="sb d-flex flex-column align-items-center justify-content-between flex-shrink-0"><svg width="10" height="16" viewBox="0 -5 10 16"><use href="#up" width="10" height="8"/></svg><div style="width:6px;height:16px;background:#cdcdcd"></div><svg width="10" height="16" viewBox="0 -4 10 16"><use href="#up" width="10" height="8" transform="rotate(180 5 4)"/></svg></div>
</div>
<div class="viewbar d-flex align-items-center">
<button class="vscale text-nowrap">1/8" = 1'-0"</button>
<button class="ib" aria-label="Detail level"><svg width="16" height="12"><path d="M.5.5h15v11H.5z" fill="#eee" stroke="#555"/><path d="M1 1h4v3H1zM10 1h5v3h-5zM5 4h5v4H5zM1 8h4v3H1zM10 8h5v3h-5z" fill="#777"/></svg></button>
<button class="ib" aria-label="Visual style"><svg width="16" height="16"><path d="M1.500 4.500l4-3h9v9l-4 4h-9zM1.500 4.500h9v10M10.500 4.500l4-3" fill="#fff" stroke="#555"/></svg></button>
<button class="ib" aria-label="Shadows"><svg width="16" height="16"><circle cx="7" cy="6.500" r="5.500" fill="#eee" stroke="#666"/><path d="M1 14.500h8" stroke="#999" stroke-width="2"/><use href="#bulb" x="8" y="5" width="8" height="11"/></svg></button>
<button class="ib" aria-label="Crop view"><svg width="16" height="16"><path d="M0 11h3M12 0v3" stroke="#1b7fd6" stroke-width="2"/><path d="M4.500 16V5.500H16M10 5v11" fill="none" stroke="#444" stroke-width="1.500"/><path d="M9 9l6 6M15 9l-6 6" stroke="#e23" stroke-width="1.700"/></svg></button>
<button class="ib" aria-label="Show crop region"><svg width="16" height="16"><path d="M0 11h3M12 0v3" stroke="#1b7fd6" stroke-width="2"/><path d="M4.500 16V5.500H16" fill="none" stroke="#444" stroke-width="1.500"/><use href="#bulb" x="8" y="5" width="8" height="11"/></svg></button>
<button class="ib" aria-label="Lock 3D view"><svg width="16" height="16"><path d="M3.500 14.500V8L8 3.500 12.500 8v6.500z" fill="#fff" stroke="#555"/><path d="M.8 9L8 2l7.200 7" fill="none" stroke="#666" stroke-width="2"/><path d="M7 10h7v5.500H7z" fill="#55c5cb"/><path d="M9 10V8a2 2 0 014 0" fill="none" stroke="#55c5cb" stroke-width="1.500"/></svg></button>
<button class="ib" aria-label="Temporary hide"><svg width="14" height="10"><circle cx="3" cy="6.500" r="2.200" fill="none" stroke="#444"/><circle cx="9" cy="6.500" r="2.200" fill="none" stroke="#444"/><path d="M1 5l4-4M5 6.500h2M11 5l2.500-4" stroke="#444" fill="none"/></svg></button>
<button class="ib" aria-label="Reveal hidden"><svg width="10" height="13"><use href="#bulb" width="10" height="13"/></svg></button>
<button class="ib" aria-label="Temporary view properties"><svg width="14" height="14"><path d="M5 9.500H.5v-9H9v4M2 3.500h4M2 6.500h3" fill="none" stroke="#555"/><path d="M5.500 5.500h8v8h-8z" fill="none" stroke="#555" stroke-dasharray="2 2"/></svg></button>
<button class="ib" aria-label="Displacement"><svg width="14" height="13"><path d="M4 3l3-2.500h6V8l-3 2.500V3z" fill="#6ab4ea" stroke="#246"/><path d="M3.500 4.500h5v6h-5z" fill="#fff" stroke="#444"/><path d="M1.500 5v7M10.500 11v1" stroke="#444"/></svg></button>
<button class="ib" aria-label="Reveal constraints"><svg width="17" height="16"><path d="M1.500 0v14M14.500 0v5M2 3.500h12M2 11.500h5" stroke="#444"/><path d="M2 3.500L5 2v3zM14 3.500L11 2v3z" fill="#444"/><use href="#bulb" x="9" y="5" width="8" height="11"/></svg></button>
<div class="flex-grow-1 h-100 d-flex align-items-center" style="background:#e8e8e8"><svg width="17" height="19"><path d="M0 0h17v19H0z" fill="#eee"/><path d="M10 5L6.500 8.500 10 12" fill="none" stroke="#999" stroke-width="2"/></svg><div class="mx-auto mb-1" style="width:16px;height:6px;background:#cdcdcd"></div><svg width="17" height="19"><path d="M0 0h17v19H0z" fill="#eee"/><path d="M6.500 5L10 8.500 6.500 12" fill="none" stroke="#888" stroke-width="2"/></svg></div>
<svg width="17" height="19"><path d="M12 6h2v2h-2zM8 11h2v2H8zM12 11h2v2h-2z" fill="#888"/></svg>
</div>
</main>
</div>

<footer class="status d-flex align-items-center">
<span class="flex-grow-1 text-nowrap">Click to select, TAB for alternates, CTRL adds, SHIFT unselects.</span>
<button class="ib" aria-label="Select links"><svg width="16" height="16"><rect x=".5" y="1.500" width="6" height="4" rx="2" fill="none" stroke="#d9772b"/><rect x="8" y="1.500" width="6" height="4" rx="2" fill="none" stroke="#d9772b"/><use href="#cur" x="6" y="3" width="9" height="13"/></svg></button>
<button class="ib" aria-label="Select underlay"><svg width="16" height="16"><path d="M0 8l5-4h6v4zM0 12l4-3h6v3z" fill="#5aa9e6" stroke="#357"/><path d="M10 0l5 5M15 0l-5 5" stroke="#e23" stroke-width="2"/><use href="#cur" x="6" y="3" width="9" height="13"/></svg></button>
<button class="ib" aria-label="Select pinned"><svg width="16" height="16"><path d="M2 1h7M4 1v5l-3 3h8M8 1v4M5 9v5" fill="none" stroke="#444"/><use href="#cur" x="7" y="3" width="9" height="13"/></svg></button>
<button class="ib" aria-label="Select by face"><svg width="16" height="16"><path d="M.5 4l5-3h4v12l-4 2h-5z" fill="#5aa9e6" stroke="#357"/><path d="M10 0l5 5M15 0l-5 5" stroke="#e23" stroke-width="2"/><use href="#cur" x="6" y="3" width="9" height="13"/></svg></button>
<button class="ib" aria-label="Drag on selection"><svg width="16" height="16"><path d="M6 0v13M0 6h12" stroke="#222" stroke-width="1.300"/><path d="M6 0l2 3H4zM0 6l3-2v4zM6 14l2-3H4z" fill="#222"/><use href="#cur" x="7" y="3" width="9" height="13"/></svg></button>
<button class="ib" aria-label="Background processes"><svg width="16" height="16"><circle cx="8" cy="8" r="6.500" fill="none" stroke="#b5b5b5" stroke-width="2.500" stroke-dasharray="2.500 2.600"/></svg></button>
<button class="filter d-flex align-items-center" aria-label="Filter"><svg width="17" height="16"><path d="M.8 1.500h15L10 8v6.500L7 12V8z" fill="#e5e5e5" stroke="#444"/></svg>:0</button>
</footer>
<script src="https://cdn.jsdelivr.net/npm/bootstrap@5.3.0/dist/js/bootstrap.bundle.min.js"></script>
</body>
</html>
